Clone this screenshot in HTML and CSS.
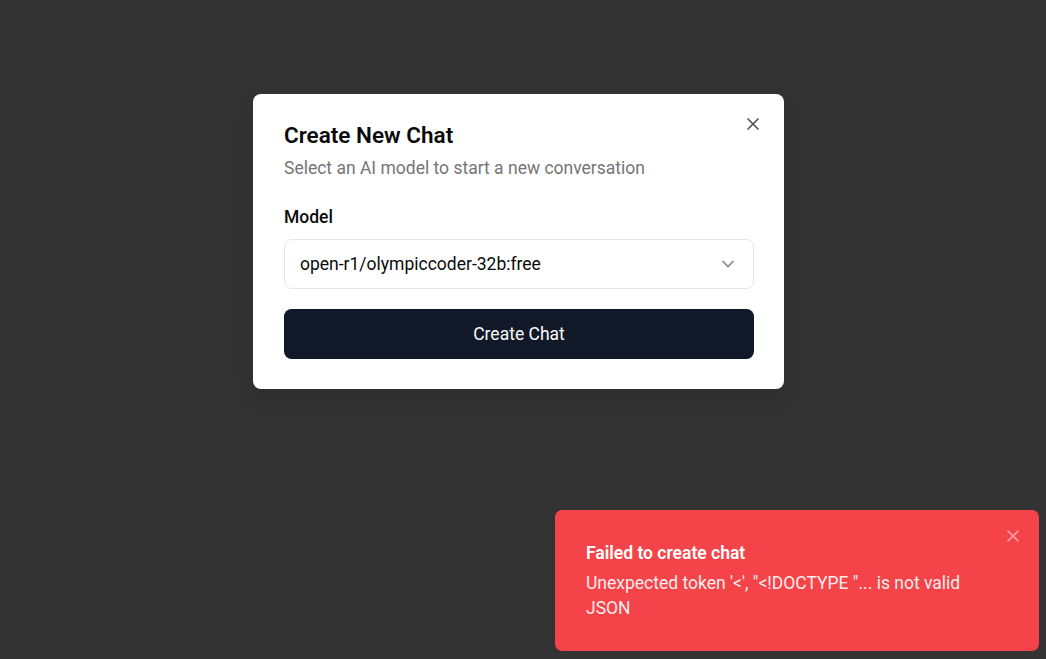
FILE: index.html
```html
<!DOCTYPE html>
<html lang="en">
<head>
<meta charset="utf-8">
<title>Create New Chat</title>
<link rel="stylesheet" href="styles.css">
</head>
<body>
<div class="overlay"></div>
<div class="dialog" role="dialog">
  <button class="dialog-close" aria-label="Close">
    <svg viewBox="0 0 24 24" width="20" height="20" fill="none" stroke="currentColor" stroke-width="2" stroke-linecap="round" stroke-linejoin="round"><path d="M18 6 6 18"/><path d="m6 6 12 12"/></svg>
  </button>
  <div class="dialog-header">
    <h2 class="dialog-title">Create New Chat</h2>
    <p class="dialog-desc">Select an AI model to start a new conversation</p>
  </div>
  <label class="field-label">Model</label>
  <div class="select">
    <span class="select-value">open-r1/olympiccoder-32b:free</span>
    <svg class="chevron" viewBox="0 0 24 24" width="20" height="20" fill="none" stroke="currentColor" stroke-width="2" stroke-linecap="round" stroke-linejoin="round"><path d="m6 9 6 6 6-6"/></svg>
  </div>
  <button class="primary-btn">Create Chat</button>
</div>

<div class="toast" role="alert">
  <div class="toast-title">Failed to create chat</div>
  <div class="toast-desc">Unexpected token '&lt;', "&lt;!DOCTYPE "... is not valid JSON</div>
  <button class="toast-close" aria-label="Close">
    <svg viewBox="0 0 24 24" width="20" height="20" fill="none" stroke="currentColor" stroke-width="2" stroke-linecap="round" stroke-linejoin="round"><path d="M18 6 6 18"/><path d="m6 6 12 12"/></svg>
  </button>
</div>
</body>
</html>
```
FILE: styles.css
```css
* { box-sizing: border-box; }
html, body { margin: 0; padding: 0; }
body {
  width: 1046px;
  height: 659px;
  overflow: hidden;
  background: #ffffff;
  font-family: Roboto, "Liberation Sans", sans-serif;
  position: relative;
}
.overlay {
  position: absolute;
  inset: 0;
  background: #333333;
}
.dialog {
  position: absolute;
  left: 253px;
  top: 94px;
  width: 531px;
  padding: 30px 30px 30px 31px;
  background: #ffffff;
  border-radius: 8px;
  box-shadow: 0 10px 20px rgba(0,0,0,0.12);
  display: flex;
  flex-direction: column;
}
.dialog-close {
  position: absolute;
  right: 21px;
  top: 20px;
  width: 20px;
  height: 20px;
  padding: 0;
  border: 0;
  background: none;
  color: #0a0a0a;
  opacity: 0.7;
  display: flex;
}
.dialog-header { display: flex; flex-direction: column; }
.dialog-title {
  margin: 0;
  font-size: 22.5px;
  line-height: 1;
  font-weight: 600;
  color: #0a0a0a;
}
.dialog-desc {
  margin: 9px 0 0;
  font-size: 17.5px;
  line-height: 25px;
  color: #757575;
}
.field-label {
  margin-top: 24px;
  font-size: 17.5px;
  line-height: 25px;
  font-weight: 500;
  color: #0a0a0a;
}
.select {
  margin-top: 9px;
  height: 50px;
  border: 1px solid #e5e5e5;
  border-radius: 7.5px;
  padding: 0 15px 0 15px;
  display: flex;
  align-items: center;
  justify-content: space-between;
  font-size: 17.5px;
  color: #0a0a0a;
}
.chevron { color: #0a0a0a; opacity: 0.5; }
.primary-btn {
  margin-top: 20px;
  height: 50px;
  border: 0;
  border-radius: 7.5px;
  background: #111827;
  color: #fafafa;
  font-family: inherit;
  font-size: 17.5px;
  font-weight: 400;
}
.toast {
  position: absolute;
  left: 555px;
  top: 510px;
  width: 484px;
  padding: 31px 40px 30px 31px;
  background: #f44449;
  border-radius: 7px;
  color: #ffffff;
}
.toast-title {
  font-size: 17.5px;
  line-height: 25px;
  font-weight: 600;
}
.toast-desc {
  margin-top: 5px;
  font-size: 17.5px;
  line-height: 25px;
  opacity: 0.9;
}
.toast-close {
  position: absolute;
  right: 16px;
  top: 16px;
  width: 20px;
  height: 20px;
  padding: 0;
  border: 0;
  background: none;
  color: #ffffff;
  opacity: 0.5;
  display: flex;
}
```
